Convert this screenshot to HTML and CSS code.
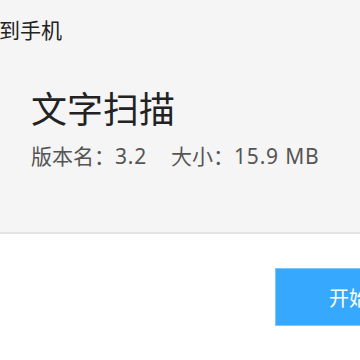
FILE: index.html
```html
<!DOCTYPE html>
<html lang="zh-CN">
<head>
<meta charset="utf-8">
<link rel="stylesheet" href="styles.css">
</head>
<body>
<div class="panel">
  <div class="header">到手机</div>
  <div class="info">
    <div class="title">文字扫描</div>
    <div class="meta">
      <span>版本名：<span class="num">3.2</span></span>
      <span>大小：<span class="num">15.9 MB</span></span>
    </div>
  </div>
</div>
<div class="footer">
  <button class="btn">开始下载</button>
</div>
</body>
</html>
```
FILE: styles.css
```css
html, body {
  margin: 0;
  padding: 0;
  width: 360px;
  height: 360px;
  overflow: hidden;
  background: #ffffff;
  font-family: "Noto Sans", "Noto Sans CJK SC", sans-serif;
}
.panel {
  background: #f5f5f5;
  border-bottom: 2px solid #e3e3e3;
  padding: 20px 0 65px 0;
}
.header {
  font-size: 21px;
  line-height: 21px;
  color: #222;
  margin-left: -1px;
}
.info {
  padding-left: 31px;
  margin-top: 51px;
}
.title {
  font-size: 36px;
  line-height: 36px;
  color: #222;
}
.meta {
  margin-top: 18px;
  font-size: 21px;
  line-height: 21px;
  color: #555;
  display: flex;
  gap: 24px;
  white-space: nowrap;
}
.num {
  letter-spacing: 0.8px;
}
.footer {
  display: flex;
  padding: 34px 0 0 275px;
}
.btn {
  flex: none;
  width: 160px;
  height: 58px;
  background: #36a9ff;
  border: 1px solid #7cc6ff;
  color: #fff;
  font-family: "Noto Sans CJK SC", sans-serif;
  font-size: 20px;
  text-align: left;
  padding: 0 0 0 53px;
  margin: 0;
  white-space: nowrap;
}
```
